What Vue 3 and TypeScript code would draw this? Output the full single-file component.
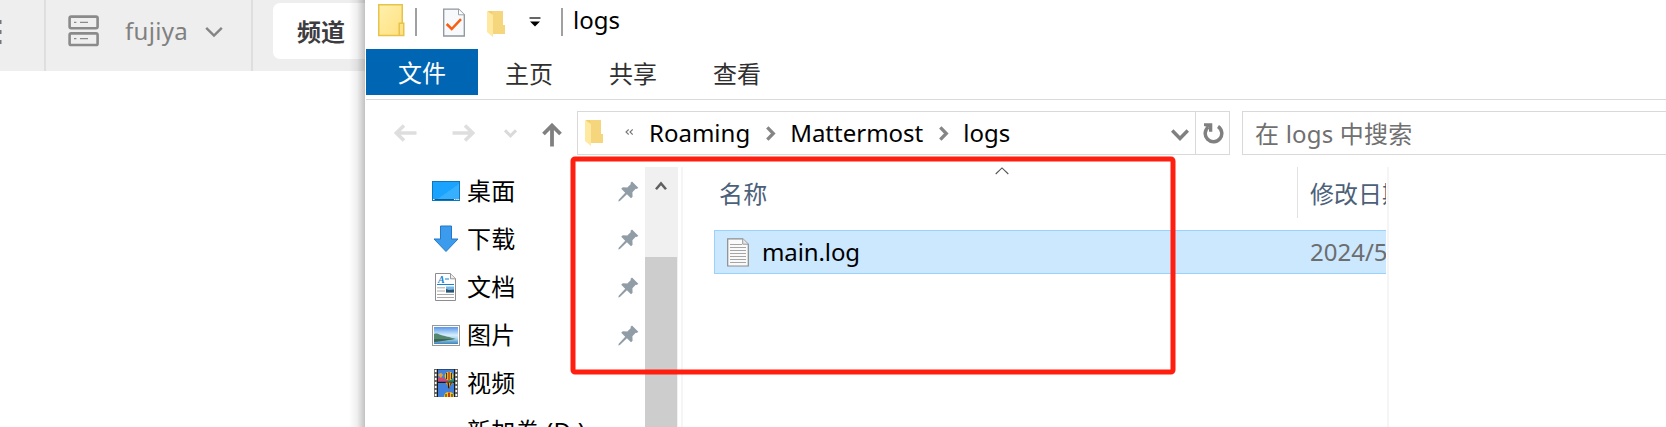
<script setup lang="ts">
interface Place {
  name: string
  icon: 'desktop' | 'download' | 'document' | 'picture' | 'video' | 'none'
  pinned: boolean
}

const places: Place[] = [
  { name: '桌面', icon: 'desktop', pinned: true },
  { name: '下载', icon: 'download', pinned: true },
  { name: '文档', icon: 'document', pinned: true },
  { name: '图片', icon: 'picture', pinned: true },
  { name: '视频', icon: 'video', pinned: false },
  { name: '新加卷 (D:)', icon: 'none', pinned: false },
]
const tabs: string[] = ['主页', '共享', '查看']
</script>

<template>
  <div class="screen">
    <div class="chat">
      <header class="chat-bar">
        <div class="dots"><svg width="2" height="28" viewBox="0 0 2 28"><path d="M0 2h1.5v4H0zM0 12h1.5v4H0zM0 22h1.5v4H0z" fill="#6f7783" /></svg></div>
        <div class="server">
          <svg class="server-icon" width="32" height="32" viewBox="0 0 32 32" fill="none" stroke="#8a8a8a" stroke-width="2.6">
            <rect x="1.6" y="1.6" width="28" height="11.6" rx="1.6" />
            <rect x="1.6" y="18.4" width="28" height="11.6" rx="1.6" />
            <path d="M6 7.4h2.4M12 7.4h8M6 23.6h2.4M12 23.6h8" stroke-width="1.1" />
          </svg>
          <span class="server-name">fujiya</span>
          <svg width="18" height="12" viewBox="0 0 18 12"><path d="M1.2 1.8 9 9.6l7.8-7.8" fill="none" stroke="#858585" stroke-width="2.4" /></svg>
        </div>
        <div class="channel">频道</div>
      </header>
      <div class="edge-shadow"></div>
    </div>

    <main class="window">
      <div class="title-bar">
        <svg class="title-folder" width="27" height="33" viewBox="0 0 27 33">
          <defs><linearGradient id="tf" x2="1" y2="1"><stop stop-color="#fff0ac" /><stop offset="1" stop-color="#ffe080" /></linearGradient></defs>
          <path d="M.75.75h23.5v18.5h1.5v12.3H.75z" fill="url(#tf)" stroke="#e8c34a" stroke-width="1.5" />
          <path d="M21.2 31V19.2h4.4" fill="none" stroke="#e8c34a" stroke-width="1.5" />
        </svg>
        <i class="sep first"></i>
        <svg class="check-page" width="22" height="29" viewBox="0 0 22 29">
          <path d="M.7 1.2h14.8l5.8 5.6V28H.7z" fill="#f8f9fb" stroke="#8d959f" stroke-width="1.3" />
          <path d="M15.5 1.2v5.6h5.8" fill="#fff" stroke="#9aa1aa" />
          <path d="m3.7 16 5 5L18 11.2" fill="none" stroke="#f95d12" stroke-width="2.5" />
        </svg>
        <svg class="quick-folder" width="19" height="28" viewBox="0 0 19 28">
          <path d="M1 1h15v14h2v9H5z" fill="#f2cf6b" /><path d="M5 1h11v14h2v9H6z" fill="#f5d67c" /><path d="m0 1 6 4v22l-6-5z" fill="#ffe8a0" />
        </svg>
        <svg class="quick-arrow" width="12" height="10" viewBox="0 0 12 10"><path d="M.5 1h11" stroke="#000" stroke-width="1.2" /><path d="M1 4.5h10L6 9.5z" fill="#000" /></svg>
        <i class="sep second"></i>
        <span class="title">logs</span>
      </div>

      <nav class="ribbon">
        <span class="file-tab">文件</span>
        <span v-for="tab in tabs" :key="tab" class="tab">{{ tab }}</span>
      </nav>

      <div class="address-row">
        <svg class="back" width="23" height="18" viewBox="0 0 23 18"><path d="M22.5 9H2M10 1.5 2.3 9l7.7 7.5" fill="none" stroke="#dedede" stroke-width="3.6" /></svg>
        <svg class="forward" width="23" height="18" viewBox="0 0 23 18"><path d="M.5 9H21M13 1.5 20.7 9 13 16.5" fill="none" stroke="#dedede" stroke-width="3.6" /></svg>
        <svg class="recent" width="13" height="9" viewBox="0 0 13 9"><path d="m1 1.3 5.5 5.5L12 1.3" fill="none" stroke="#dadada" stroke-width="3" /></svg>
        <svg class="up" width="20" height="24" viewBox="0 0 20 24"><path d="M10 23.5V3M1.5 11 10 2.5l8.5 8.5" fill="none" stroke="#808080" stroke-width="3.8" /></svg>
        <div class="address">
          <svg class="path-folder" width="19" height="28" viewBox="0 0 19 28">
            <path d="M1 1h15v14h2v9H5z" fill="#f2cf6b" /><path d="M5 1h11v14h2v9H6z" fill="#f5d67c" /><path d="m0 1 6 4v22l-6-5z" fill="#ffe8a0" />
          </svg>
          <svg class="overflow" width="8" height="6" viewBox="0 0 8 6"><path d="M3.7.5 1 3l2.7 2.5M7.7.5 5 3l2.7 2.5" fill="none" stroke="#777" stroke-width="1.1" /></svg>
          <span class="crumb roaming">Roaming</span>
          <svg class="chev" width="10" height="15" viewBox="0 0 10 15"><path d="m1.3 1.3 6 6.2-6 6.2" fill="none" stroke="#858585" stroke-width="3.3" /></svg>
          <span class="crumb matter">Mattermost</span>
          <svg class="chev" width="10" height="15" viewBox="0 0 10 15"><path d="m1.3 1.3 6 6.2-6 6.2" fill="none" stroke="#858585" stroke-width="3.3" /></svg>
          <span class="crumb last">logs</span>
          <svg class="expand" width="18" height="13" viewBox="0 0 18 13"><path d="m1.2 1.5 7.8 8 7.8-8" fill="none" stroke="#808080" stroke-width="3.5" /></svg>
          <div class="refresh"><svg width="22" height="23" viewBox="0 0 22 23"><path d="M16 4.5A8.3 8.3 0 1 1 6.3 5" fill="none" stroke="#808080" stroke-width="3.5" /><path d="M2 1.2h8.3v8.5H7V5.5L2 4z" fill="#808080" /></svg></div>
        </div>
        <div class="search">在 logs 中搜索</div>
      </div>

      <div class="content">
        <aside class="places">
          <div v-for="place in places" :key="place.name" class="place">
            <div class="place-icon">
              <svg v-if="place.icon === 'desktop'" width="28" height="20" viewBox="0 0 28 20">
                <defs><linearGradient id="dk" x2="1" y2="1"><stop stop-color="#19a3fe" /><stop offset=".55" stop-color="#1ba4ff" /><stop offset=".56" stop-color="#35b0ff" /><stop offset="1" stop-color="#38afff" /></linearGradient></defs>
                <rect x=".5" y=".5" width="27" height="19" fill="url(#dk)" stroke="#0b78bd" />
                <path d="M1 18.5h26" stroke="#075c94" /><path d="M1 18.5h1.5M22 18.5h1.5M24.2 18.5h1.5M26.2 18.5h1" stroke="#fff" />
              </svg>
              <svg v-else-if="place.icon === 'download'" width="28" height="28" viewBox="0 0 28 28"><path d="M8.5 1h11v13H26L14 26.5 2 14h6.5z" fill="#3d9bed" stroke="#2379c4" /></svg>
              <svg v-else-if="place.icon === 'document'" width="28" height="30" viewBox="0 0 28 30">
                <path d="M3.5 1.5h15L23.5 6.5v22h-20z" fill="#fff" stroke="#8d8d8d" /><path d="M18.5 1.5v5.3h5" fill="#eee" stroke="#999" />
                <text x="6" y="10.5" class="doc-letter">A</text>
                <path d="M13 7h4M5 12.5h17" stroke="#1583d1" stroke-width="1.2" />
                <path d="M5 15.8h8M5 19h8M5 22.5h17M5 25.5h17" stroke="#aaa" />
                <path d="M14 14.5h8v6h-8z" fill="#75b7ea" /><path d="m14 17 3 1 5-.5v3h-8z" fill="#2c5368" />
              </svg>
              <svg v-else-if="place.icon === 'picture'" width="28" height="21" viewBox="0 0 28 21">
                <defs><linearGradient id="sky" x2="0" y2="1"><stop stop-color="#5796e9" /><stop offset=".48" stop-color="#d6eefd" /><stop offset=".7" stop-color="#a8d5ee" /><stop offset="1" stop-color="#3b83ba" /></linearGradient></defs>
                <rect x=".5" y=".5" width="27" height="20" fill="#fff" stroke="#999" /><rect x="2" y="2" width="24" height="17" fill="url(#sky)" />
                <path d="M2 9c3-1 4 0 7 1 4 1 8 2 15 4l-7 1-8 1-7 1z" fill="#55876f" /><path d="M2 14c5 0 10 0 20 0l-12 2-8 1z" fill="#3c6558" />
              </svg>
              <svg v-else-if="place.icon === 'video'" width="28" height="28" viewBox="0 0 28 28">
                <path d="M2 0h24v28H2z" fill="#666" /><path d="M5 0h18v28H5z" fill="#181818" /><path d="M6 .5h16v12H6zM6 14h16v14H6z" fill="#4180dc" />
                <path d="M3.7 1v27M24.3 1v27" stroke="#fff" stroke-width="1.7" stroke-dasharray="2 2" />
                <path d="m6 9 3-1 4 2 4-1v3.5H6z" fill="#d6456a" /><path d="M16 10.5h6v2h-6z" fill="#2e8b57" /><path d="M6 6q3-4 5 0l-2 3z" fill="#e8a03a" />
                <ellipse cx="17" cy="7" rx="4.3" ry="4.3" fill="#f4c51b" /><path d="M14.6 4v6M19.4 4v6" stroke="#33230f" /><path d="M16.3 3h1.4v8h-1.4z" fill="#be351a" />
                <path d="M13.5 13.5h7.5l-3 4v2h-2v-2z" fill="#e4a91b" /><path d="M15.5 13.5h1.2l1 6h-1.5zM18.5 13.5H20l-2 4z" fill="#291620" />
                <path d="M12 28q0-5 5-5t5 5z" fill="#f4c51b" /><path d="M16 23.5h2V28h-2z" fill="#c53b1a" /><path d="M14 25v3M20 25v3" stroke="#33230f" />
              </svg>
            </div>
            <span class="place-name">{{ place.name }}</span>
            <svg v-if="place.pinned" class="pin" width="21" height="21" viewBox="0 0 21 21"><path d="m14 .5 6.3 6.2-1.5 1.4-1.1-.4-3.3 3.6.2 4.4-1.6 1.5-4.1-4-7 6.8-1.6.5.4-1.7 6.5-7-4-4 1.6-1.6 4.5.2 3.6-3.4-.5-1z" fill="#919da6" /></svg>
          </div>
        </aside>
        <div class="scrollbar">
          <svg width="12" height="10" viewBox="0 0 12 10"><path d="M1 8.3 6 2.4l5 5.9" fill="none" stroke="#606060" stroke-width="2.5" /></svg>
          <div class="thumb"></div>
        </div>
        <section class="files">
          <div class="file-head">
            <span class="name-head">名称</span>
            <svg class="sort" width="14" height="8" viewBox="0 0 14 8"><path d="M.7 7 7 .9 13.3 7" fill="none" stroke="#555" stroke-width="1.1" /></svg>
            <span class="date-head">修改日期</span>
          </div>
          <div class="file-row">
            <svg width="22" height="29" viewBox="0 0 22 29">
              <path d="M.7.8h15l5.6 5.4V28H.7z" fill="#fafafa" stroke="#8b8b8b" stroke-width="1.2" /><path d="M15.7.8v5.4h5.6" fill="#e8e8e8" stroke="#999" />
              <path d="M3 6.5h12M3 9.5h16M3 12.5h16M3 15.5h16M3 18.5h16M3 21.5h16M3 24.5h16" stroke="#a5a5a5" />
            </svg>
            <span class="file-name">main.log</span>
            <span class="file-date">2024/5</span>
          </div>
        </section>
      </div>
    </main>

    <svg class="mark" width="606" height="219" viewBox="0 0 606 219"><rect x="3" y="3" width="600" height="213" rx="2" fill="none" stroke="#ff1e10" stroke-width="5" /></svg>
  </div>
</template>

<style>
body { overflow: hidden; }
</style>

<style scoped>
.screen { position: relative; display: flex; width: 1666px; height: 427px; overflow: hidden; background: #fff; font-family: "Noto Sans", "Noto Sans CJK SC", sans-serif; font-size: 24px; line-height: 36px; color: #000; white-space: nowrap; }
svg { display: block; flex: none; }
span { flex: none; }
.chat { position: relative; width: 365px; flex: none; overflow: hidden; }
.chat-bar { display: flex; height: 71px; background: #eee; }
.dots { width: 44px; padding-top: 18px; box-sizing: border-box; flex: none; }
.server { display: flex; align-items: center; box-sizing: border-box; width: 209px; padding: 0 0 8px 22px; border: solid #dedede; border-width: 0 2px; color: #808080; flex: none; }
.server-icon { margin-right: 25px; margin-top: -2px; }
.server-name { width: 80px; margin-top: -2px; letter-spacing: 0.3px; }
.channel { width: 130px; height: 56px; margin: 3px 0 0 20px; padding-left: 24px; box-sizing: border-box; border-radius: 7px; background: #fff; color: #3d3c40; font-family: "Noto Sans CJK SC", sans-serif; font-weight: 700; line-height: 55px; flex: none; }
.edge-shadow { position: absolute; top: 0; right: 0; width: 16px; height: 427px; background: linear-gradient(90deg, #0000, #00000010 50%, #0000003d); }
.window { flex: 1; min-width: 0; padding-left: 1px; background: #fff; }
.title-bar { display: flex; align-items: flex-start; height: 49px; }
.title-folder { margin: 4px 0 0 12px; }
.sep { width: 2px; height: 28px; margin-top: 8px; background: #a0a0a0; flex: none; }
.first { margin-left: 10px; }
.check-page { margin: 8px 0 0 26px; }
.quick-folder { margin: 10px 0 0 22px; }
.quick-arrow { margin: 17px 0 0 23px; }
.second { margin-left: 20px; }
.title { margin: 2px 0 0 10px; }
.ribbon { display: flex; height: 50px; border-bottom: 1px solid #dadada; color: #303030; }
.file-tab { width: 112px; height: 46px; background: #0065b3; color: #fff; text-align: center; line-height: 48px; }
.tab { width: 48px; margin-left: 28px; margin-right: 28px; line-height: 50px; }
.file-tab + .tab { margin-left: 27px; }
.address-row { display: flex; align-items: center; height: 44px; padding-top: 11px; overflow: hidden; }
.back { margin-left: 28px; }
.forward { margin-left: 35px; }
.recent { margin-left: 29px; }
.up { margin: 4px 0 0 25px; }
.address { display: flex; align-items: center; box-sizing: border-box; width: 653px; height: 44px; margin-left: 15px; border: 1px solid #d9d9d9; flex: none; }
.path-folder { margin-left: 7px; }
.overflow { margin-left: 21px; margin-top: -2px; }
.crumb { margin-left: 15px; }
.roaming { margin-left: 16px; }
.chev { margin-left: 16px; }
.matter { margin-left: 14px; }
.last { margin-left: 14px; }
.expand { margin-left: auto; margin-right: 6px; margin-top: 4px; }
.refresh { display: flex; align-items: center; justify-content: center; width: 33px; height: 42px; border-left: 1px solid #d9d9d9; }
.search { width: 460px; height: 42px; margin-left: 12px; padding-left: 12px; border: 1px solid #d9d9d9; color: #707070; line-height: 43px; letter-spacing: 0.2px; flex: none; }
.content { display: flex; height: 272px; padding-top: 12px; box-sizing: border-box; }
.places { width: 279px; height: 260px; overflow: hidden; flex: none; }
.place { display: flex; align-items: center; height: 48px; padding-left: 66px; }
.place-icon { width: 28px; margin-right: 7px; flex: none; }
.place-name { width: 151px; letter-spacing: 0.2px; }
.doc-letter { font: italic bold 10px "Liberation Serif", serif; fill: #1583d1; }
.scrollbar { display: flow-root; width: 33px; height: 260px; margin-right: 3px; background: #f0f0f0; flex: none; }
.scrollbar svg { margin: 14px 0 66px 10px; }
.thumb { width: 32px; height: 170px; background: #cdcdcd; }
.files { width: 708px; height: 260px; box-sizing: border-box; border: solid #f5f5f5; border-width: 0 2px; overflow: hidden; flex: none; }
.file-head { display: flex; height: 51px; color: #4c607a; }
.name-head { width: 276px; margin: 9px 0 0 36px; letter-spacing: 0.3px; }
.date-head { box-sizing: border-box; width: 89px; height: 51px; margin-left: 288px; padding: 9px 0 0 12px; border-left: 1px solid #e2e2e2; overflow: hidden; }
.file-row { display: flex; align-items: center; box-sizing: border-box; width: 672px; height: 44px; margin: 12px 0 0 31px; padding-left: 12px; border: 1px solid #99d1ff; border-right: 0; background: #cce8ff; overflow: hidden; }
.file-name { width: 548px; margin-left: 13px; letter-spacing: -0.1px; }
.file-date { color: #6d6d6d; }
.mark { position: absolute; left: 570px; top: 156px; }
</style>
